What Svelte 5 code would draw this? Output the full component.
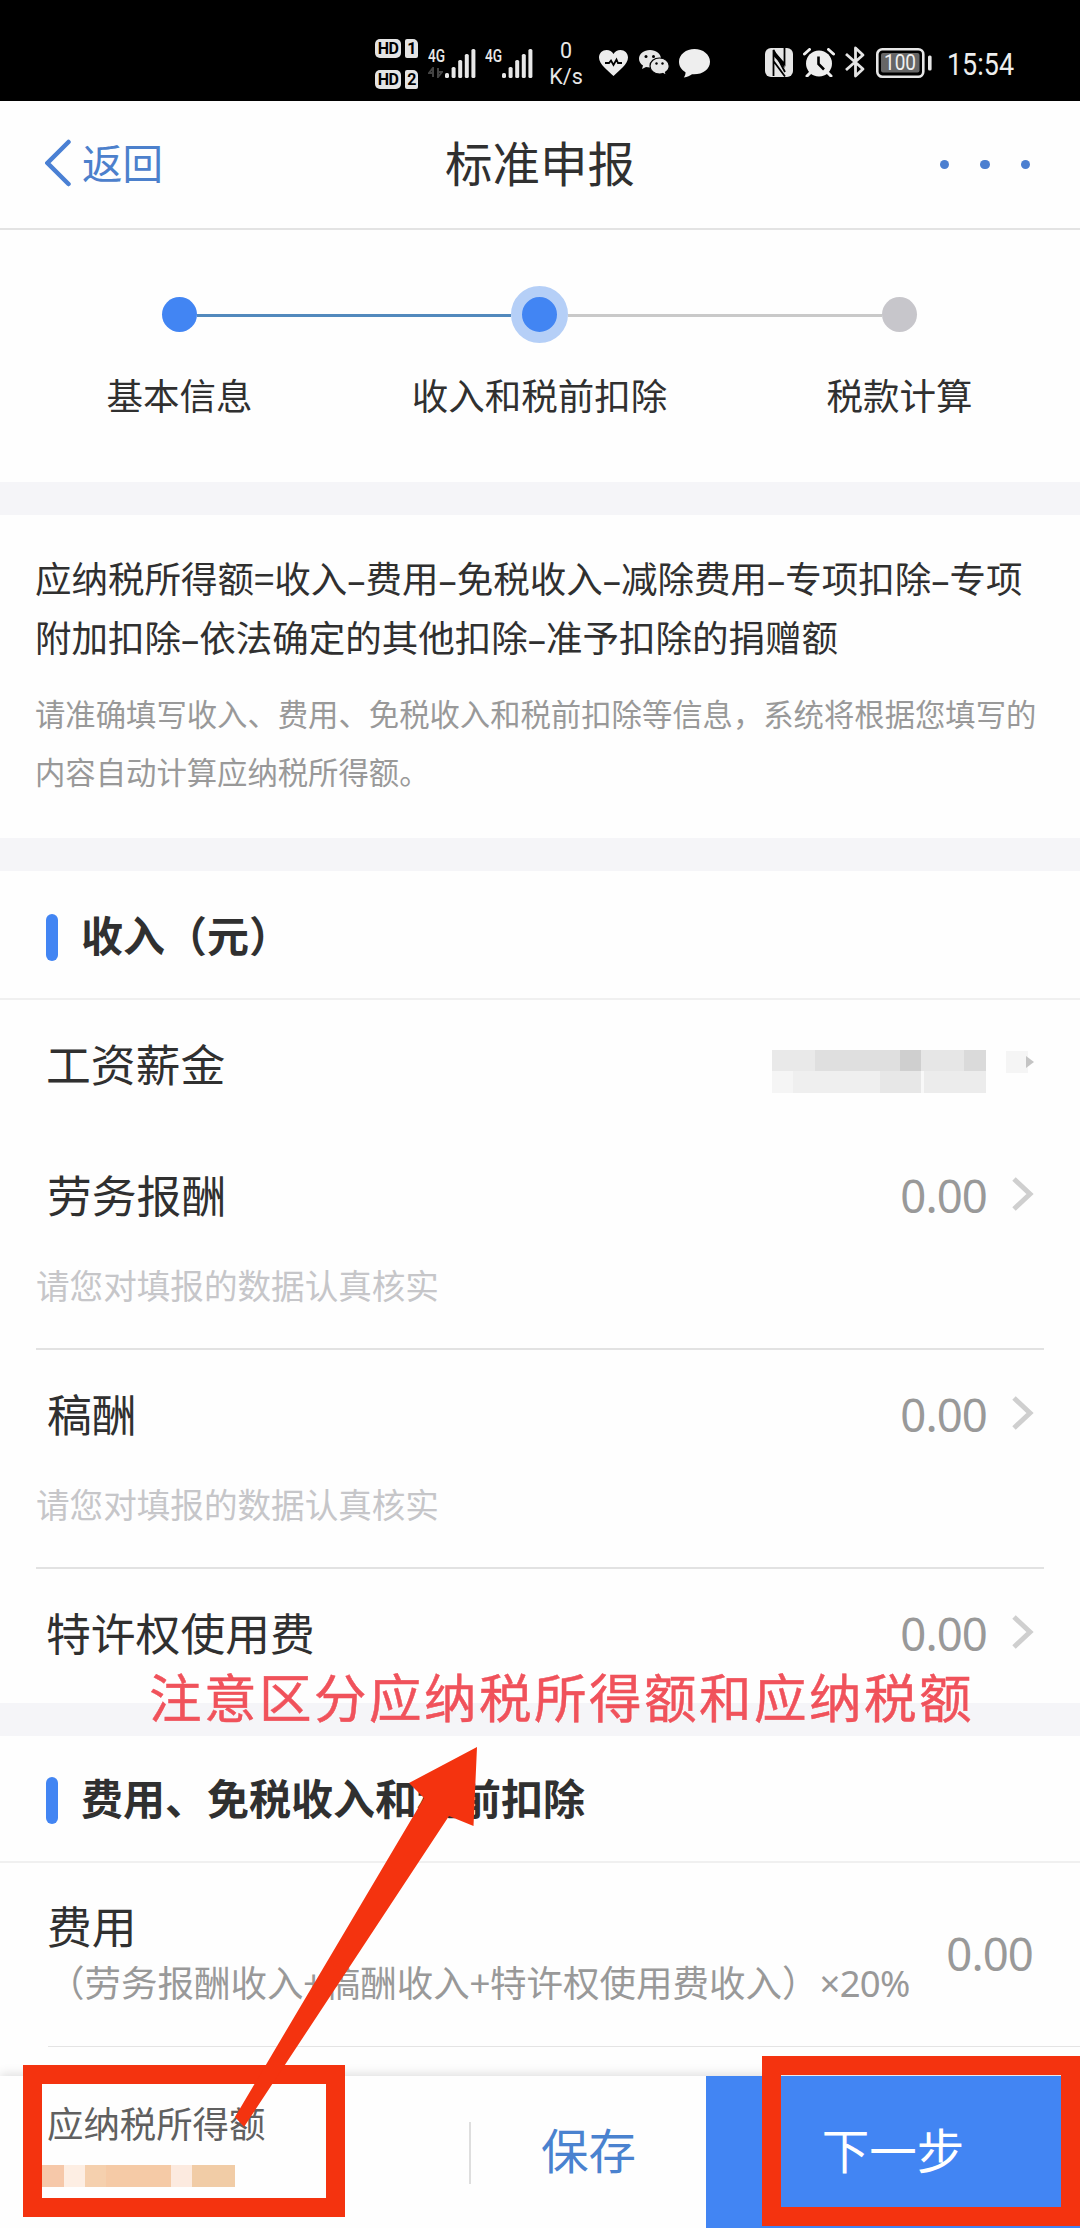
<script>
    const steps = [
        { label: "基本信息", state: "done" },
        { label: "收入和税前扣除", state: "current" },
        { label: "税款计算", state: "todo" },
    ];

    const incomes = [
        { label: "劳务报酬", value: "0.00", note: "请您对填报的数据认真核实" },
        { label: "稿酬", value: "0.00", note: "请您对填报的数据认真核实" },
        { label: "特许权使用费", value: "0.00" },
    ];

    const signalBars = [5, 11, 18, 24, 29];

    // hidden amounts: [width, color]
    const salaryTop = [[43, "#e9e9e9"], [85, "#dfdfdf"], [21, "#cfcfcf"], [43, "#e6e6e6"], [22, "#dadada"]];
    const salaryBottom = [[21, "#f5f5f5"], [87, "#efefef"], [41, "#e7e7e7"], [3, "#f8f8f8"], [62, "#ececec"]];
    const taxable = [[22, "#f6c8a9"], [21, "#fdeee3"], [21, "#f5d0ae"], [65, "#f5caa6"], [21, "#fceadf"], [43, "#f1cca6"]];
</script>

{#snippet signal()}
    <svg class="bars" width="31" height="30" viewBox="0 0 31 30">
        {#each signalBars as h, i}
            <rect x={i * 6.6} y={30 - h} width="4" height={h} rx="1.6" fill="#e8e8e8" />
        {/each}
    </svg>
{/snippet}

{#snippet mosaic(cells)}
    <div class="mosaic">
        {#each cells as [w, color]}
            <i style="width: {w}px; background: {color}"></i>
        {/each}
    </div>
{/snippet}

{#snippet arrow()}
    <svg class="arrow" width="22" height="34" viewBox="0 0 22 34">
        <path d="M2 2 L18 17 L2 32" fill="none" stroke="#cfcfcf" stroke-width="5" />
    </svg>
{/snippet}

<div class="screen">
    <div class="status">
        <div class="hd">
            {#each [1, 2] as sim}
                <div class="hd-row">
                    <span class="hd-tag">HD</span>
                    <span class="sim">{sim}</span>
                </div>
            {/each}
        </div>
        <div class="net">
            <span class="gen">4G</span>
            <svg class="updown" width="15" height="11" viewBox="0 0 15 11">
                <path d="M5 10V1L1 6H5M10 1V10L14 5H10" fill="none" stroke="#444" stroke-width="2" />
            </svg>
            {@render signal()}
        </div>
        <div class="net second">
            <span class="gen">4G</span>
            {@render signal()}
        </div>
        <div class="speed"><span>0</span><span>K/s</span></div>
        <svg class="heart" width="29" height="26" viewBox="0 0 29 26">
            <path d="M14.5 26C9 20.500 0 14.500 0 7.500C0 3 3.500 0 7.500 0C10.500 0 13 1.500 14.500 4C16 1.500 18.500 0 21.500 0C25.500 0 29 3 29 7.500C29 14.500 20 20.500 14.500 26Z" fill="#ececec" />
            <path d="M6 13H10L12 10.500L14.500 15L17.500 9.500L19 13H23" fill="none" stroke="#000" stroke-width="1.8" />
        </svg>
        <svg class="wechat" width="31" height="27" viewBox="0 0 31 27">
            <path d="M11 1C5 1 0 4.800 0 9.800C0 12.500 1.500 15 4 16.600L3 20L7 18C8.300 18.300 9.600 18.500 11 18.500C17 18.500 22 14.700 22 9.800S17 1 11 1Z" fill="#e6e6e6" />
            <circle cx="7" cy="7.500" r="1.500" />
            <circle cx="14.500" cy="7.500" r="1.500" />
            <path d="M20.500 9C15.200 9 11 12.500 11 17S15.200 25 20.500 25C21.700 25 22.800 24.900 23.800 24.500L27.500 26.500L26.500 23.300C28.800 21.800 30.200 19.500 30.200 17C30.200 12.500 25.800 9 20.500 9Z" fill="#e6e6e6" stroke="#000" stroke-width="1.2" />
            <circle cx="17.500" cy="14.500" r="1.200" />
            <circle cx="23.500" cy="14.500" r="1.200" />
        </svg>
        <svg class="bubble" width="31" height="29" viewBox="0 0 31 29">
            <path d="M15.500 0C7 0 0 5.500 0 12.700C0 17 2.500 21 6.500 23.200C6.600 25.200 6 27 4.800 28.500C8.500 28 11 26.800 13 25.200C23 26 31 20.500 31 12.700C31 5.500 24 0 15.500 0Z" fill="#eee" />
        </svg>
        <svg class="nfc" width="28" height="29" viewBox="0 0 28 29">
            <rect width="28" height="29" rx="6" fill="#e6e6e6" />
            <path d="M8.500 28V2L20 24M20 28.500L8.500 13M19.500 0V16L10 5" fill="none" stroke="#000" stroke-width="1.800" />
            <path d="M8.500 2L19.500 16V20L8.500 8Z" />
        </svg>
        <svg class="alarm" width="32" height="29" viewBox="0 0 32 29">
            <circle cx="16" cy="15.500" r="13" fill="#eee" />
            <path d="M1.500 6L6.500 1.500M25.500 1.500L30.500 6M4 28L7 25M28 28L25 25" stroke="#eee" stroke-width="3" stroke-linecap="round" />
            <path d="M15.500 8.500V16L21 21.500" fill="none" stroke="#000" stroke-width="2.6" />
        </svg>
        <svg class="bt" width="20" height="32" viewBox="0 0 20 32">
            <path d="M1 8L18 23L10.500 30V2L18 9L1 24" fill="none" stroke="#e4e4e4" stroke-width="2.800" stroke-linejoin="round" />
        </svg>
        <svg class="battery" width="56" height="30" viewBox="0 0 56 30">
            <rect x="1.300" y="1.300" width="46" height="27.400" rx="5" fill="none" stroke="#e6e6e6" stroke-width="2.600" />
            <rect x="5" y="5" width="38.500" height="19.500" rx="2" fill="#666" />
            <rect x="52" y="7.500" width="3.600" height="15" rx="1.500" fill="#e6e6e6" />
            <text x="8" y="22.300" font-size="22" fill="#f0f0f0" textLength="32" lengthAdjust="spacingAndGlyphs">100</text>
        </svg>
        <svg class="clock" width="80" height="40" viewBox="0 0 80 40">
            <text x="0" y="30" font-size="32" fill="#eee" textLength="67" lengthAdjust="spacingAndGlyphs">15:54</text>
        </svg>
    </div>

    <header class="navbar">
        <div class="back">
            <svg width="26" height="48" viewBox="0 0 26 48">
                <path d="M23.500 3L2.500 24L23.500 45" fill="none" stroke="#4a80d4" stroke-width="4.500" stroke-linecap="round" />
            </svg>
            <span>返回</span>
        </div>
        <h1>标准申报</h1>
        <div class="more"><i></i><i></i><i></i></div>
    </header>

    <div class="steps">
        {#each steps as step}
            <div class="step {step.state}">
                <div class="track">
                    <span class="line"></span>
                    <span class="dot"></span>
                    <span class="line"></span>
                </div>
                <span class="step-label">{step.label}</span>
            </div>
        {/each}
    </div>

    <div class="band"></div>

    <div class="formula">
        <p class="equation">
            应纳税所得额=收入<b>–</b>费用<b>–</b>免税收入<b>–</b>减除费用<b>–</b>专项扣除<b>–</b>专项<br />附加扣除<b>–</b>依法确定的其他扣除<b>–</b>准予扣除的捐赠额
        </p>
        <p class="hint">
            请准确填写收入、费用、免税收入和税前扣除等信息，系统将根据您填写的<br />内容自动计算应纳税所得额。
        </p>
    </div>

    <div class="band"></div>

    <h2 class="income-title"><span>收入（元）</span></h2>
    <div class="row first">
        <span class="label">工资薪金</span>
        <div class="hidden-value">
            {@render mosaic(salaryTop)}
            {@render mosaic(salaryBottom)}
        </div>
        <svg class="masked-arrow" width="28" height="22" viewBox="0 0 28 22">
            <rect width="22" height="22" fill="#f5f5f5" />
            <path d="M20 5L28 11L20 17Z" fill="#c4c4c4" />
        </svg>
    </div>
    {#each incomes as item}
        <div class="item" class:noted={item.note}>
            <div class="row">
                <span class="label">{item.label}</span>
                <span class="value">{item.value}</span>
                {@render arrow()}
            </div>
            {#if item.note}
                <p class="note">{item.note}</p>
            {/if}
        </div>
    {/each}

    <div class="band"></div>

    <h2 class="deduct-title"><span>费用、免税收入和税前扣除</span></h2>
    <div class="fee">
        <div class="fee-text">
            <span class="label">费用</span>
            <span class="fee-rule">（劳务报酬收入+稿酬收入+特许权使用费收入）<em>×20%</em></span>
        </div>
        <span class="value">0.00</span>
    </div>

    <footer>
        <div class="total">
            <span>应纳税所得额</span>
            {@render mosaic(taxable)}
        </div>
        <button class="save">保存</button>
        <button class="next">下一步</button>
    </footer>

    <div class="callout">注意区分应纳税所得额和应纳税额</div>
    <div class="mark mark-total"></div>
    <div class="mark mark-next"></div>
    <svg class="pointer" width="250" height="390" viewBox="0 0 250 390">
        <path d="M249 3L181 39L196 54L7 373L16 383L221 72L245.500 82Z" fill="#f4330f" />
    </svg>
</div>

<style>
    :global(body) {
        margin: 0;
        background: #fefefe;
    }

    .screen {
        position: relative;
        display: flex;
        flex-direction: column;
        width: 1080px;
        height: 2228px;
        overflow: hidden;
        background: #fefefe;
        color: #303030;
        font-family: "Noto Sans CJK SC", "Noto Sans", sans-serif;
    }

    h1,
    h2,
    p {
        margin: 0;
        font-weight: 400;
    }

    svg {
        display: block;
        flex: none;
    }

    /* status bar */
    .status {
        display: flex;
        align-items: flex-start;
        height: 101px;
        padding-left: 375px;
        background: #000;
        color: #e8e8e8;
        font-family: Roboto, "Noto Sans", sans-serif;
        flex: none;
    }

    .hd {
        display: flex;
        flex-direction: column;
        gap: 12px;
        padding-top: 39px;
        width: 53px;
    }

    .hd-row {
        display: flex;
        gap: 4px;
        height: 19px;
    }

    .hd-tag,
    .sim {
        background: #e4e4e4;
        color: #000;
        font-weight: 700;
        font-size: 16px;
        line-height: 19px;
        text-align: center;
        letter-spacing: -0.5px;
    }

    .hd-tag {
        width: 26px;
        border-radius: 5px;
    }

    .sim {
        width: 13px;
        border-radius: 2px 5px 2px 2px;
    }

    .net {
        position: relative;
        display: flex;
        padding: 48px 0 0 17px;
        width: 40px;
    }

    .gen {
        position: absolute;
        left: 0;
        top: 46px;
        font-size: 19px;
        line-height: 19px;
        font-weight: 500;
        transform: scaleX(0.72);
        transform-origin: left;
    }

    .updown {
        position: absolute;
        left: 0;
        top: 67px;
    }

    .speed {
        display: flex;
        flex-direction: column;
        align-items: center;
        margin-left: 7px;
        padding-top: 38px;
        width: 34px;
        font-size: 21.500px;
        line-height: 26px;
    }

    .heart {
        margin: 50px 0 0 16px;
    }

    .wechat {
        margin: 49px 0 0 11px;
    }

    .bubble {
        margin: 49px 0 0 9px;
    }

    .nfc {
        margin: 48px 0 0 55px;
    }

    .alarm {
        margin: 48px 0 0 10px;
    }

    .bt {
        margin: 46px 0 0 10px;
    }

    .battery {
        margin: 48px 0 0 11px;
    }

    .clock {
        margin: 45px 0 0 15px;
    }

    /* title bar */
    .navbar {
        display: grid;
        grid-template-columns: 1fr auto 1fr;
        align-items: center;
        box-sizing: border-box;
        height: 129px;
        padding: 0 50px 4px;
        border-bottom: 2px solid #e3e3e3;
        flex: none;
    }

    .back {
        display: flex;
        align-items: center;
        gap: 11px;
        margin-left: -5px;
        color: #4c80cc;
        font-size: 40.500px;
        line-height: 60px;
    }

    h1 {
        font-size: 47.500px;
        line-height: 60px;
        margin-top: -2px;
    }

    .back span {
        margin-top: -2px;
    }

    .more {
        display: flex;
        justify-content: flex-end;
        gap: 31px;
        padding-top: 4px;
    }

    .more i {
        width: 9.500px;
        height: 9.500px;
        border-radius: 50%;
        background: #4c7fd0;
    }

    /* progress */
    .steps {
        display: flex;
        box-sizing: border-box;
        width: 1080px;
        height: 252px;
        padding-top: 55px;
        margin-left: -0.500px;
        flex: none;
    }

    .step {
        display: flex;
        flex-direction: column;
        align-items: center;
        gap: 22px;
        width: 360px;
    }

    .track {
        display: flex;
        align-items: center;
        width: 100%;
        height: 59px;
    }

    .line {
        flex: 1;
        height: 3px;
        margin-top: 2px;
        background: #c9c9c9;
    }

    .done .line,
    .current .line:first-child {
        background: #5289bd;
    }

    .step:first-child .line:first-child,
    .step:last-child .line:last-child {
        background: none;
    }

    .dot {
        width: 35px;
        height: 35px;
        border-radius: 50%;
        background: #4285f3;
    }

    .current .dot {
        border: 11.500px solid #b5cff7;
    }

    .todo .dot {
        background: #c7c6cb;
    }

    .step-label {
        font-size: 36.500px;
        line-height: 58px;
    }

    .band {
        height: 33px;
        background: #f5f5f8;
        flex: none;
    }

    /* formula */
    .formula {
        box-sizing: border-box;
        height: 323px;
        padding: 34px 0 0 35px;
        white-space: nowrap;
        flex: none;
    }

    .equation {
        font-size: 36.500px;
        line-height: 58.500px;
    }

    .equation b {
        font-family: "Noto Sans", sans-serif;
        font-weight: 400;
        line-height: 0;
    }

    .hint {
        margin-top: 18px;
        color: #999;
        font-size: 30.350px;
        line-height: 58px;
    }

    /* sections */
    h2 {
        display: flex;
        align-items: center;
        box-sizing: border-box;
        padding-left: 46px;
        border-bottom: 2px solid #f0f0f0;
        font-size: 42px;
        font-weight: 700;
        line-height: 60px;
        flex: none;
    }

    h2::before {
        content: "";
        width: 12px;
        height: 47px;
        margin-right: 23px;
        border-radius: 6px;
        background: #4285f3;
    }

    h2 span {
        margin-top: -7px;
    }

    .income-title {
        height: 129px;
        padding-top: 5px;
    }

    .deduct-title {
        height: 127px;
        padding-top: 4px;
    }

    .row {
        display: flex;
        align-items: center;
        height: 130px;
        padding: 0 46px;
    }

    .first {
        height: 131px;
        flex: none;
    }

    .label {
        flex: 1;
        font-size: 44.800px;
        line-height: 60px;
        margin-top: -5px;
    }

    .value {
        color: #999;
        font-family: "Noto Sans", sans-serif;
        font-size: 45.500px;
        line-height: 60px;
        letter-spacing: -0.900px;
        margin-top: -2px;
    }

    .arrow {
        margin: -5px 0 0 25px;
    }

    .item {
        flex: none;
    }

    .noted {
        box-sizing: border-box;
        width: 1008px;
        height: 219px;
        margin: 0 36px;
        border-bottom: 2px solid #e2e2e2;
    }

    .noted .row {
        padding: 0 10px 0 11px;
    }

    .item:not(.noted) {
        height: 134px;
    }

    .note {
        color: #c6c6c9;
        font-size: 33.600px;
        line-height: 48px;
    }

    .mosaic {
        display: flex;
        height: 21.500px;
    }

    .mosaic i {
        height: 100%;
    }

    .hidden-value {
        margin-top: 11px;
    }

    .masked-arrow {
        margin: -8px 0 0 20px;
    }

    .fee {
        display: flex;
        box-sizing: border-box;
        height: 184px;
        margin-left: 48px;
        padding: 36px 47px 0 0;
        border-bottom: 1px solid #e4e4e4;
        flex: none;
    }

    .fee-text {
        display: flex;
        flex-direction: column;
        flex: 1;
        white-space: nowrap;
    }

    .fee-text .label {
        flex: none;
        margin-top: -4px;
        margin-left: -1px;
    }

    .fee-rule {
        color: #999;
        font-size: 36.500px;
        line-height: 54px;
        margin-top: 0;
    }

    .fee-rule em {
        margin-left: 1px;
        font-family: "Noto Sans", sans-serif;
        font-style: normal;
        line-height: 0;
        letter-spacing: -0.700px;
    }

    .fee .value {
        margin-top: 24px;
    }

    /* bottom bar */
    footer {
        display: flex;
        height: 152px;
        margin-top: auto;
        background: #fefefe;
        box-shadow: 0 -2px 10px rgba(0, 0, 0, 0.13);
        flex: none;
    }

    .total {
        position: relative;
        width: 471px;
        box-sizing: border-box;
        padding: 19px 0 0 42px;
        color: #606060;
        font-size: 36.400px;
        line-height: 54px;
    }

    .total::after {
        content: "";
        position: absolute;
        right: 0;
        top: 46px;
        width: 2px;
        height: 62px;
        background: #dedede;
    }

    .total span {
        display: block;
        margin-left: 5px;
    }

    .total .mosaic {
        margin-top: 16px;
    }

    button {
        padding: 0 0 6px;
        border: 0;
        background: none;
        font-family: inherit;
        font-size: 47.500px;
        line-height: 60px;
    }

    .save {
        width: 235px;
        color: #4a82cf;
    }

    .next {
        flex: 1;
        background: #4285f3;
        color: #fff;
    }

    /* annotations on top of the page */
    .callout {
        position: absolute;
        left: 149px;
        top: 1660px;
        color: #f0525b;
        font-size: 52.500px;
        line-height: 70px;
        letter-spacing: 2.500px;
        white-space: nowrap;
        -webkit-text-stroke: 0.500px #f0525b;
    }

    .mark {
        position: absolute;
        box-sizing: border-box;
        border: 19px solid #f4330f;
    }

    .mark-total {
        left: 23px;
        top: 2065px;
        width: 322px;
        height: 152px;
    }

    .mark-next {
        left: 762px;
        top: 2056px;
        width: 318px;
        height: 170px;
    }

    .pointer {
        position: absolute;
        left: 228px;
        top: 1744px;
    }
</style>
